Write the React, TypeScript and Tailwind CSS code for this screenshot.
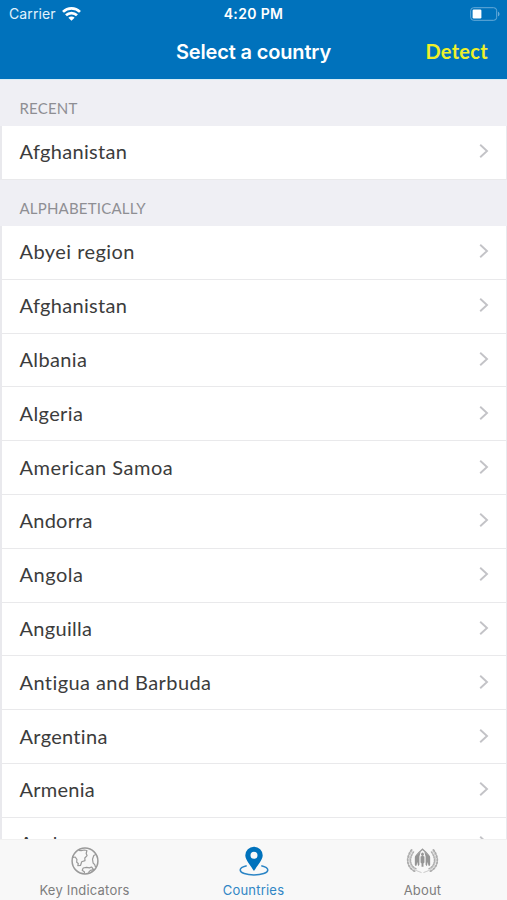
import React from "react";

type Country = { name: string; tracking: string };

const countries: Country[] = [
  { name: "Abyei region", tracking: "tracking-[0.45px]" },
  { name: "Afghanistan", tracking: "tracking-[0.3px]" },
  { name: "Albania", tracking: "tracking-[0.35px]" },
  { name: "Algeria", tracking: "tracking-[0.4px]" },
  { name: "American Samoa", tracking: "tracking-[0.5px]" },
  { name: "Andorra", tracking: "tracking-[0.25px]" },
  { name: "Angola", tracking: "tracking-[0.5px]" },
  { name: "Anguilla", tracking: "tracking-[0.3px]" },
  { name: "Antigua and Barbuda", tracking: "tracking-[0.42px]" },
  { name: "Argentina", tracking: "tracking-[0.3px]" },
  { name: "Armenia", tracking: "tracking-[0.25px]" },
  { name: "Aruba", tracking: "tracking-[0.4px]" },
];

function Chevron() {
  return (
    <svg width="10" height="14" viewBox="0 0 10 14" fill="none" stroke="#c3c3c7" strokeWidth="1.9">
      <path d="M1.2 .8 8 7l-6.800 6.200" />
    </svg>
  );
}

function Row({ name, tracking }: Country) {
  return (
    <div className="flex h-[53.8px] shrink-0 items-center justify-between border-b border-[#e9e9eb] bg-white pr-[17px] pb-[2px] pl-[17.5px]">
      <span className={`text-[20px] leading-none text-[#3c3c3c] ${tracking}`}>{name}</span>
      <Chevron />
    </div>
  );
}

function SectionTitle({ children }: { children: React.ReactNode }) {
  return <h2 className="pl-[19.5px] text-[15px] leading-[18px] tracking-[0.2px] text-[#8e8e93]">{children}</h2>;
}

function Wifi() {
  return (
    <svg width="19" height="14" viewBox="0 0 19 14" fill="none" stroke="white" strokeWidth="2.7">
      <path d="M1 4.9a12.2 12.2 0 0 1 17 0" />
      <path d="M4 8.3a7.8 7.8 0 0 1 11 0" />
      <path d="M9.5 13.8 6.400 10.800a4.300 4.300 0 0 1 6.200 0Z" fill="white" stroke="none" />
    </svg>
  );
}

function Battery() {
  return (
    <svg width="31" height="14" viewBox="0 0 31 14">
      <rect x="0.7" y="0.7" width="26" height="12.6" rx="3" fill="none" stroke="#66abd9" strokeWidth="1" />
      <rect x="2.6" y="2.5" width="8.8" height="9" rx="1.2" fill="white" />
      <path d="M28 4.7c2 .7 2 3.9 0 4.6Z" fill="#66abd9" />
    </svg>
  );
}

function Globe() {
  return (
    <svg width="28" height="28" viewBox="0 0 28 28" fill="none" stroke="#9a9a9a" strokeWidth="1.2" strokeLinejoin="round">
      <circle cx="14" cy="14" r="12.900" strokeWidth="1.5" />
      <path d="M1.800 10.500 4.200 10l1.700 2.300-.2 3 1.600 1.200-.5 2.200 2.700-.2 1.200-3.700 3.300-1.200-.2-2.600 2.300-2.300-.9-2.200.7-3-2.700-.5-3 .7-2.700-.2" />
      <path d="M25.200 7.300 22.800 8.500l-1.300 3.700.6 3.800 1.600 1.600.9 2.700" />
      <path d="m13.300 26.500.2-1.600-2.300-1.600 1-2.300 3.300-.7 3 .6 2-.9 2.200 2.600-3.300.8-2.100 2.300" />
    </svg>
  );
}

function Pin() {
  return (
    <svg width="30" height="30" viewBox="0 0 30 30" fill="none">
      <path d="M7.7 19.8C3.8 20.7 1.2 22.2 1.2 24c0 2.9 6.2 4.9 13.8 4.9S28.8 26.900 28.800 24c0-1.800-2.600-3.300-6.500-4.200" stroke="#2a84c5" strokeWidth="1.5" />
      <path fillRule="evenodd" d="M15 .7a8.600 8.600 0 0 0-8.700 8.700c0 4.600 5.700 10.200 8.700 15.700 3-5.500 8.700-11.100 8.700-15.700A8.600 8.600 0 0 0 15 .7Zm0 5.100a3.500 3.500 0 1 1 0 7 3.500 3.500 0 0 1 0-7Z" fill="#0072bc" />
    </svg>
  );
}

const leaves: [number, number, number][] = [
  [5.4, 3.4, 35], [3.7, 6.300, 22], [2.500, 9.500, 8], [2, 12.800, -5], [2.300, 16.100, -20],
  [3.500, 19.200, -36], [5.500, 21.900, -50], [8.200, 23.900, -65],
];

function LaurelHalf() {
  return (
    <g>
      <path d="M6.800 3.200C2.600 8.300 2.500 17 7 21.300c2.200 2.200 5 3.200 9 4.600" fill="none" stroke="#b4b4b4" strokeWidth=".7" />
      {leaves.map(([x, y, angle]) => (
        <g key={y} transform={`translate(${x} ${y}) rotate(${angle})`}>
          <ellipse cx="-.2" rx="1" ry="1.900" />
          <ellipse cx="2.700" cy=".4" rx=".75" ry="1.600" />
        </g>
      ))}
    </g>
  );
}

function Emblem() {
  return (
    <svg width="33" height="28" viewBox="0 0 34 28" fill="#adadad">
      <LaurelHalf />
      <g transform="translate(34 0) scale(-1 1)">
        <LaurelHalf />
      </g>
      <path d="M9.800 18V10C10.300 7.500 15 3.800 17 1.900c2 1.900 6.700 5.600 7.200 8.100v8" fill="none" stroke="#999999" strokeWidth="1.400" />
      <path d="M9.300 19V9.700l5.800-4.900-1.300 4.600v8.400l-1.300 1.700-.9-4.500-.8 4ZM24.700 19V9.700l-5.800-4.900 1.300 4.600v8.400l1.300 1.700.9-4.500.8 4Z" fill="#959595" />
      <ellipse cx="17" cy="7" rx="1.400" ry="1.800" fill="#959595" />
      <path d="m15 9.300 2-.7 2 .7v6.200l-1 1v3.300h-2v-3.300l-1-1Z" fill="#959595" />
    </svg>
  );
}

export default function App() {
  return (
    <div className="flex h-[900px] w-[507px] flex-col overflow-hidden bg-[#efeff4] font-['Lato','Liberation_Sans',sans-serif]">
      <header className="h-[79px] shrink-0 bg-[#0072bc] text-white">
        <div className="grid h-[27px] grid-cols-3 items-center pr-[6px] pl-[9px] font-['Inter',sans-serif]">
          <div className="flex items-center gap-[6px]">
            <span className="pt-px text-[14px] leading-none tracking-[0.1px] text-[#e2f2fc]">Carrier</span>
            <Wifi />
          </div>
          <span className="pr-[3px] text-center text-[14px] leading-none font-semibold tracking-[0.35px]">4:20 PM</span>
          <div className="flex justify-end">
            <Battery />
          </div>
        </div>
        <div className="grid h-[51px] grid-cols-[1fr_auto_1fr] items-center pr-[19px] pb-[1px] pl-[19px]">
          <span />
          <h1 className="font-['Inter',sans-serif] text-[20px] leading-none font-semibold tracking-[-0.15px]">Select a country</h1>
          <button className="justify-self-end pb-[2px] text-[20px] leading-none font-bold tracking-[0.3px] text-[#eff02a]">Detect</button>
        </div>
      </header>

      <main className="flex min-h-0 flex-1 flex-col overflow-hidden border-t border-[#d6edf6]">
        <div className="h-[46px] shrink-0 pt-[19px]">
          <SectionTitle>RECENT</SectionTitle>
        </div>
        <div className="shrink-0 border-r border-l-2 border-[#e9e9ed]">
          <Row name="Afghanistan" tracking="tracking-[0.3px]" />
        </div>
        <div className="h-[46.200px] shrink-0 pt-[19px]">
          <SectionTitle>ALPHABETICALLY</SectionTitle>
        </div>
        <div className="shrink-0 border-r border-l-2 border-[#e9e9ed]">
          {countries.map((country) => (
            <Row key={country.name} {...country} />
          ))}
        </div>
      </main>

      <nav className="grid h-[61px] shrink-0 grid-cols-3 border-t border-[#f0f0f0] bg-[#f8f8f8] font-['Inter',sans-serif] text-[13px] leading-none tracking-[0.2px] text-[#7d7d7d]">
        <div className="flex flex-col items-center">
          <div className="flex h-[44px] items-center pb-[2px]"><Globe /></div>
          <span>Key Indicators</span>
        </div>
        <div className="flex flex-col items-center text-[#3086c5]">
          <div className="flex h-[44px] items-center pb-[3px]"><Pin /></div>
          <span>Countries</span>
        </div>
        <div className="flex flex-col items-center">
          <div className="flex h-[44px] items-center pb-[2px]"><Emblem /></div>
          <span>About</span>
        </div>
      </nav>
    </div>
  );
}
